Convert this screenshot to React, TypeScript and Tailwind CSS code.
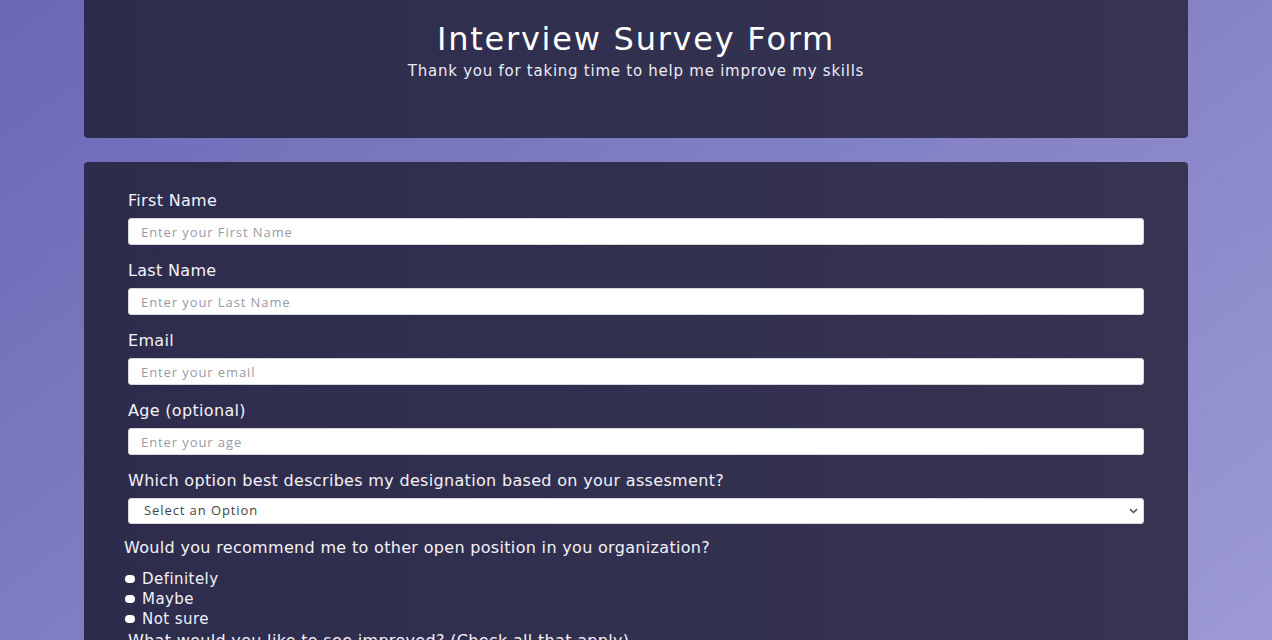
import React from "react";

const textFields = [
  { label: "First Name", placeholder: "Enter your First Name", type: "text" },
  { label: "Last Name", placeholder: "Enter your Last Name", type: "text" },
  { label: "Email", placeholder: "Enter your email", type: "email" },
  { label: "Age (optional)", placeholder: "Enter your age", type: "number" },
];

const recommendOptions = ["Definitely", "Maybe", "Not sure"];

const labelClass =
  "block h-[18px] text-[16px] leading-[18px] tracking-[0.02em] text-[#f3f2f8] [font-family:'DejaVu_Sans',sans-serif]";

const inputClass =
  "mt-[8px] block h-[27px] w-full rounded-[3px] border border-[#d6d6de] bg-white px-[12px] text-[13px] tracking-[0.07em] text-[#333] outline-none placeholder:text-[#9a9aa6] [font-family:'Open_Sans',sans-serif]";

export default function App() {
  return (
    <div className="min-h-screen w-full bg-linear-to-br from-[#6a68b5] to-[#a6a3da] pb-10">
      <div className="mx-auto w-[1104px]">
        <header className="h-[138px] rounded-b-[4px] bg-linear-to-r from-[#2e2c4d] to-[#363451] pt-[20px] text-center text-white">
          <h1 className="text-[32px] leading-[38px] tracking-[0.055em] [font-family:'DejaVu_Sans',sans-serif]">
            Interview Survey Form
          </h1>
          <p className="mt-[4px] text-[15px] leading-[18px] tracking-[0.05em] text-[#ecebf5] [font-family:'DejaVu_Sans',sans-serif]">
            Thank you for taking time to help me improve my skills
          </p>
        </header>

        <form className="mt-[24px] rounded-[4px] bg-linear-to-r from-[#2e2c4d] to-[#363451] px-[44px] pb-10 pt-[30px]">
          {textFields.map((field, i) => (
            <div key={field.label} className={i === 0 ? "" : "mt-[17px]"}>
              <label className={labelClass}>{field.label}</label>
              <input
                type={field.type}
                placeholder={field.placeholder}
                className={inputClass}
              />
            </div>
          ))}

          <div className="mt-[17px]">
            <label className={labelClass}>
              Which option best describes my designation based on your assesment?
            </label>
            <div className="relative mt-[8px]">
              <select className="block h-[26px] w-full appearance-none rounded-[3px] border border-[#d6d6de] bg-white px-[15px] text-[13px] tracking-[0.07em] text-[#444] outline-none [font-family:'Open_Sans',sans-serif]">
                <option>Select an Option</option>
                <option>Junior Developer</option>
                <option>Mid-level Developer</option>
                <option>Senior Developer</option>
              </select>
              <svg
                className="pointer-events-none absolute right-[6px] top-[10px] h-[6px] w-[9px] text-[#555]"
                viewBox="0 0 9 6"
                fill="none"
                stroke="currentColor"
                strokeWidth="1.6"
              >
                <path d="M1 1.2l3.5 3.3L8 1.2" />
              </svg>
            </div>
          </div>

          <p className="-ml-[4px] mt-[15px] h-[18px] text-[16px] leading-[18px] tracking-[0.02em] text-[#f3f2f8] [font-family:'DejaVu_Sans',sans-serif]">
            Would you recommend me to other open position in you organization?
          </p>

          <div className="mt-[12px]">
            {recommendOptions.map((opt) => (
              <label
                key={opt}
                className="-ml-[3px] flex h-[20px] items-center gap-[7px] text-[15px] tracking-[0.03em] text-[#f3f2f8] [font-family:'DejaVu_Sans',sans-serif]"
              >
                <span className="h-[8px] w-[10px] rounded-full bg-white" />
                {opt}
              </label>
            ))}
          </div>

          <p className="mt-[2px] h-[20px] text-[16px] leading-[20px] tracking-[0.02em] text-[#f3f2f8] [font-family:'DejaVu_Sans',sans-serif]">
            What would you like to see improved? (Check all that apply)
          </p>
          <div className="h-[200px]" />
        </form>
      </div>
    </div>
  );
}
